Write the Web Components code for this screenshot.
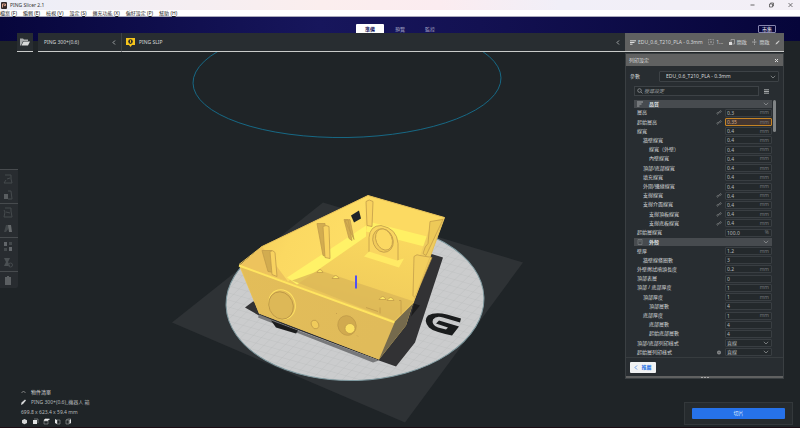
<!DOCTYPE html>
<html lang="zh-Hant">
<head>
<meta charset="utf-8">
<title>PING Slicer 2.1</title>
<style>
html,body{margin:0;height:100%}
body{font:5px/7px "Noto Sans","Noto Sans CJK TC",sans-serif;color:#d6d8da;background:#1f2427;overflow:hidden}
</style>
</head>
<body>
<slicer-app></slicer-app>
<script>
const RESET = `*{box-sizing:border-box}button,input,select{font:inherit;color:inherit;margin:0;padding:0;border:0;background:none;min-width:0;border-radius:0;outline:0}button{cursor:pointer}svg{display:block;flex:none}a{color:inherit;text-decoration:none}`;
function define(name, html, setup) {
  customElements.define(name, class extends HTMLElement {
    connectedCallback() {
      if (this.shadowRoot) return;
      const root = this.attachShadow({mode: 'open'});
      const t = document.createElement('template');
      t.innerHTML = '<style>' + RESET + '</style>' + (typeof html === 'function' ? html(this) : html);
      root.append(t.content.cloneNode(true));
      if (setup) setup(this, root);
    }
  });
}

define('title-bar', `
<style>
:host{display:flex;align-items:center;height:10px;padding:0 7px 0 1px;gap:3px;color:#333;background:linear-gradient(90deg,#eceef8,#fbeeee 40%,#fbecf0 55%,#f1eff8 70%,#f3eff6)}
h1{font:inherit;margin:0;flex:1}
div{display:flex;gap:14px}button{width:5px;height:6px}
</style>
<svg width="6" height="7" viewBox="0 0 6 7"><rect width="6" height="7" rx="1" fill="#33292a"/><path d="M1.5 5.5V2h3v1.6H2.8" stroke="#d9a38c" fill="none"/></svg>
<h1>PING Slicer 2.1</h1>
<div>
<button aria-label="最小化"><svg width="5" height="6" viewBox="0 0 5 6"><path d="M.5 3h4" stroke="#444" stroke-width=".8"/></svg></button>
<button aria-label="還原"><svg width="5" height="6" viewBox="0 0 5 6"><path d="M.5 2h3v3h-3zM1.5 1.8V1h3v3h-.8" stroke="#444" stroke-width=".7" fill="none"/></svg></button>
<button aria-label="關閉"><svg width="5" height="6" viewBox="0 0 5 6"><path d="M.5 1l4 4m0-4l-4 4" stroke="#444" stroke-width=".7"/></svg></button>
</div>`);

define('menu-bar', `
<style>
:host{display:block;background:#fff;color:#222;border-bottom:1px solid #a9a9bb}
nav{display:flex;gap:6px;height:6px;line-height:6px;white-space:nowrap}
u{text-decoration-thickness:1px}
</style>
<nav>${[['檔案','F'],['編輯','E'],['檢視','V'],['設定','S'],['擴充功能','X'],['偏好設定','P'],['幫助','H']].map(([t,k]) => `<a href="#">${t} (<u>${k}</u>)</a>`).join('')}</nav>`);

define('stage-header', `
<style>
:host{display:grid;grid-template-columns:1fr auto 1fr;align-items:center;height:24px;padding:0 24px;background:linear-gradient(90deg,#07063c,#17165c 40%,#131152 60%,#06053a)}
nav{grid-column:2;display:flex;gap:2px}
button{width:28px;height:10px;line-height:10px;color:#a3a3c4;border-radius:1px}
button.on{background:#fff;color:#17165c;font-weight:700}
a{justify-self:end;width:18px;height:8px;line-height:6px;border:1px solid #8685ad;border-radius:1px;color:#fff;text-align:center}
</style>
<nav><button class="on">準備</button><button>預覽</button><button>監控</button></nav><a href="#">市集</a>`);

const chevronLeft = `<svg width="4" height="5" viewBox="0 0 4 5"><path d="M3 .5l-2 2 2 2" stroke="currentColor" stroke-width=".7" fill="none"/></svg>`;
const chevronDown = `<svg width="6" height="4" viewBox="0 0 6 4"><path d="M.8 .8L3 3 5.2.8" stroke="#999c9e" stroke-width=".7" fill="none"/></svg>`;

define('config-bar', `
<style>
:host{display:flex;gap:5px;height:19px;margin:-8px 16px 0 17px;position:relative}
button{display:flex;align-items:center;background:#282d31;border-bottom:1px solid #c9cbca;text-align:left;white-space:nowrap}
.open{width:16px;justify-content:center}
.bar{flex:1;display:flex;min-width:0}
.printer{width:84px;padding:0 5px 0 6px;justify-content:space-between;border-right:1px solid #3c4145}
.material{flex:1;padding:0 5px 0 4px;gap:4px}.material span{flex:1}
.profile{width:159px;background:#606161;padding:0 4px 0 5px;gap:2px;justify-content:space-between}
.profile span{display:flex;align-items:center;gap:2px}
</style>
<button class="open" aria-label="開啟檔案"><svg width="10" height="8" viewBox="0 0 10 8"><path d="M0 7.5V.5h3l1 1h4V3H3L1 7.5z" fill="#a9acae"/><path d="M3.4 3.5H10L8 7.5H1.5z" fill="#d8dada"/></svg></button>
<div class="bar">
<button class="printer">PING 300+(0.6)${chevronLeft}</button>
<button class="material"><svg width="9" height="9" viewBox="0 0 9 9"><path d="M0 0h9v7H6L4.500 9 3 7H0z" fill="#f6c51c"/><circle cx="4.500" cy="3.600" r="2.300" fill="#2a2c2d"/><path d="M4.500 2.200v2.500" stroke="#f6c51c"/></svg><span>PING SLIP</span>${chevronLeft}</button>
<button class="profile">
<span><svg width="6" height="5" viewBox="0 0 6 5"><path d="M0 .8h6M0 2.500h4.500M0 4.200h2.500" stroke="#ddd"/></svg>EDU_0.6_T210_PLA - 0.3mm</span>
<span><svg width="6" height="6" viewBox="0 0 6 6"><path d="M.5 .5h5v5h-5z" stroke="#aaa" stroke-width=".6" stroke-dasharray="1 .5" fill="none"/><path d="M2 2l2 2m0-2L2 4" stroke="#aaa" stroke-width=".5"/></svg>1...</span>
<span><svg width="6" height="6" viewBox="0 0 6 6"><path d="M2 .5h3.500V5H2z" stroke="#bbb" stroke-width=".6" fill="none"/><path d="M0 3h3v3H0z" fill="#ddd"/></svg>開啟</span>
<span><svg width="5" height="6" viewBox="0 0 5 6"><path d="M2.500 0v6M0 3h5" stroke="#bbb" stroke-width=".7" stroke-dasharray="2 .5"/></svg>開啟</span>
<svg width="5" height="5" viewBox="0 0 5 5"><path d="M.5 4.500l.5-1.500L4 .5l.6.6L2 4z" fill="#ccc"/></svg>
</button></div>`);

define('build-plate', `
<style>:host{display:block;position:absolute;inset:0}svg{width:100%;height:100%}</style>
<svg viewBox="0 0 800 428" preserveAspectRatio="xMidYMid slice" aria-hidden="true">
<defs>
<pattern id="g" width="8.500" height="8.500" patternUnits="userSpaceOnUse" patternTransform="matrix(.93 .3 -.68 .62 4 2)"><path d="M0 0H8.500M0 0V8.500" stroke="#b7b9ba" stroke-width=".7"/></pattern>
<linearGradient id="wall" x2="1" y2=".3"><stop stop-color="#f0c75a"/><stop offset=".5" stop-color="#fbd962"/><stop offset="1" stop-color="#fede66"/></linearGradient>
<linearGradient id="front" x2="1" y2=".5"><stop stop-color="#e3bd59"/><stop offset="1" stop-color="#e0bb5a"/></linearGradient>
<linearGradient id="floor" x1=".8" y1="0" x2=".4" y2="1"><stop stop-color="#fbd95f"/><stop offset=".65" stop-color="#f2ce5c"/><stop offset="1" stop-color="#deb958"/></linearGradient>
</defs>
<ellipse cx="347" cy="81" rx="154" ry="57" fill="none" stroke="#16708e" stroke-width=".9" transform="rotate(-1 347 81)"/>
<path d="M172 323L323 203 523 263 405 423z" fill="#2e3235"/>
<g transform="rotate(-2 355 302)"><ellipse cx="355" cy="302" rx="129" ry="79" fill="#cbcccd"/><ellipse cx="355" cy="302" rx="129" ry="79" fill="url(#g)" stroke="#7f999f"/></g>
<path d="M253 302L245 308 259 316 379 361 396 367 415 343 443 258 430 254 400 300z" fill="#323234"/>
<path d="M414 304l6 2-9 11z" fill="#1c1c1d"/>
<path d="M259 315L298 331 379 361 373 363 258 318z" fill="#77787a"/><path d="M271 321l27 10-2 3-20-6z" fill="#1c1c1d"/>
<path d="M461 319L447 315Q435 312 428 316 423 321 429 328 433 332 452 336L459 327 439 321 436 324 448 328 446 330 438 328Q431 325 433 320 436 316 443 318L460 323z" fill="#1a1c1d"/>
<path d="M239 266L262 247 368 196 444.500 218 413 304 406 326 379 360 259 314z" fill="#edc75c"/>
<path d="M240 266L262 247 368 196 366 229 288 282z" fill="url(#wall)"/>
<path d="M240 266L262 247l26 35z" fill="#edc35d"/>
<path d="M368 196L444.500 218 429 248 364 229z" fill="#fcda62"/>
<path d="M288 282L366 229 429 248 413 304 395 321z" fill="url(#floor)"/>
<path d="M287 278L366 226V237L297 285z" fill="#fff267"/>
<path d="M368 222L431 238 428 248 366 232z" fill="#fff064"/>
<path d="M292 281L320 271 414 302 394 321z" fill="#dcb857" opacity=".8"/>
<path d="M444.500 218L413 304 415 270 432 222z" fill="#efcc5e"/>
<path d="M430 222l13-2-17 36-3-2q2-8 5-10z" fill="#edc958" stroke="#be9848" stroke-width=".7"/>
<path d="M414 257q3-3 6-1l12 2-17 40-2-2z" fill="#f3cf5e" stroke="#bd9849" stroke-width=".7"/>
<path d="M240 266L395 322 379 360 259 314z" fill="url(#front)"/>
<path d="M239 266L395 323" stroke="#ffe560" stroke-width="2"/>
<path d="M239 265L262 247 368 196 444.500 218 413 304" fill="none" stroke="#e4bf59" stroke-width="1"/>
<path d="M395 322L413 304 406 326 379 360z" fill="#756a4d"/>
<g stroke="#c19c4a" stroke-width=".8">
<path d="M262 251l10 0 2 22-6-1zM317 224l8 0 2 33-4-1zM344 220l4 0 4 21-3-2zM345 221l5-1 4 20z" fill="#d2ac50"/>
<path d="M270 252q3-2 5 1l2 24-5-2zM323 227q3-2 6 0l1 32-5-1zM366 202q3-3 7 0l-1 25-5-1z" fill="#f8d25f"/>
<path d="M369 254V238q1-12 12-12 16 3 17 18v19z" fill="#f9d560"/>
<ellipse cx="383" cy="241" rx="10" ry="12" transform="rotate(-22 383 241)" fill="#f1cb5b"/><ellipse cx="384" cy="240" rx="8" ry="11" transform="rotate(-22 384 240)" fill="#fbd862"/>
<path d="M364 257l5-5 28 9 7-2-5 9z" fill="#ffea65" stroke="none"/>
<ellipse cx="282" cy="305" rx="13" ry="15" transform="rotate(-24 282 305)" fill="none" stroke="#fee163" stroke-width="1"/><ellipse cx="281" cy="306" rx="12" ry="14" transform="rotate(-24 281 306)" fill="#ddb857" stroke="#b99446"/>
<ellipse cx="315" cy="325" rx="3.500" ry="4.500" transform="rotate(-25 315 325)" fill="#f0cb5b"/>
<ellipse cx="347" cy="326" rx="9" ry="10" transform="rotate(-24 347 326)" fill="#d1aa4f"/><circle cx="350" cy="329" r="5" fill="#fbe063"/>
<path d="M317 273q3-6 6 0zM332 279q4-6 7 0zM379 300q4-6 7 0zM387 301q4-6 7 0z" fill="#ffe864"/>
<path d="M399 301l2 0V315M366 308l12 4M336 314l1 0M357 336l1 1M380 308v6" fill="none"/>
</g>
<path d="M351 216l8-5 2 8-7 4z" fill="#1e2429"/>
<path d="M355 276h2v13h-2z" fill="#5151f2"/>
</svg>`);

const toolIcons = [
 '<path d="M2 2h6v4l1 4H1l2-3M4 6l3-1" fill="none" stroke="#454a4d"/>',
 '<path d="M5 2h3l1 8H5" fill="none" stroke="#454a4d"/><path d="M1 5h4v5H1z" fill="#595d60"/>',
 '<path d="M2 1h6v3l1 6H1l1-5-1-2M3 5l4 1" fill="none" stroke="#454a4d"/>',
 '<path d="M3 2h3v3L3 9H1z" fill="#414649"/><path d="M5 2h3l1 7H6z" fill="#65696b"/>',
 '<path d="M1 1h3v4H1zM6 6h3v4H6z" fill="#62666a"/><path d="M6 1h3v3H6zM1 7h3v3H1z" fill="#43484b"/>',
 '<path d="M1 1h6L5 5l2 4H1l2-4z" fill="#4b5053"/><circle cx="7.500" cy="8" r="2" fill="none" stroke="#454a4d"/>',
 '<path d="M2 2h2V1h2v1h2v8H2z" fill="#5b5f62"/>'];
const toolNames = ['移動','縮放','旋轉','鏡像','單一模型設定','支撐攔阻器','自訂'];
define('tool-strip', `
<style>:host{display:block;width:18px;background:#282c30;border-radius:0 2px 2px 0}
button{display:flex;align-items:center;justify-content:center;width:100%;height:17px;padding-right:2px}
button:nth-of-type(odd){border-top:1px solid #474b4e}</style>
${toolIcons.map((p,i) => `<button aria-label="${toolNames[i]}"><svg width="10" height="11" viewBox="0 0 10 11">${p}</svg></button>`).join('')}`);

define('object-info', `
<style>:host{display:block;padding-left:21px;color:#b7babc}
button.line,.line{display:flex;align-items:center;gap:5px;height:10px;white-space:nowrap}
.line svg{width:5px}.title{color:#d6d8da}
.views{display:flex;gap:4px;padding:1px 0 2px}.views button{width:7px;height:7px}</style>
<button class="line title"><svg width="5" height="4" viewBox="0 0 5 4"><path d="M.5 3l2-2 2 2" stroke="#aaa" stroke-width=".7" fill="none"/></svg>物件清單</button>
<button class="line"><svg width="5" height="6" viewBox="0 0 5 6"><path d="M0 6l.5-2.500L4 .5l1 1L2 5z" fill="#d5d7d8"/></svg>PING 300+(0.6)_機器人 箱</button>
<div class="line">699.8 x 623.4 x 59.4 mm</div>
<div class="views">${[
 '<path d="M3.500 1L6 2.300v2.600L3.500 6.200 1 4.900V2.300z" fill="#d5d7d8"/>',
 '<path d="M2 1h4v4" fill="none" stroke="#8b8f91" stroke-width=".7"/><path d="M1 2h4v4H1z" fill="#e0e2e3"/>',
 '<path d="M1 3h4v3H1z" fill="none" stroke="#8b8f91" stroke-width=".7"/><path d="M1 2.500L2 1h4.500L5 2.500z" fill="#eee" stroke="#eee" stroke-width=".6"/>',
 '<path d="M3 2h3v4H3z" fill="none" stroke="#8b8f91" stroke-width=".7"/><path d="M1 1l2 1v4L1 5z" fill="#e0e2e3"/>',
 '<path d="M1 2h3v4H1zL3 1h3" fill="none" stroke="#8b8f91" stroke-width=".7"/><path d="M4.500 2L6 1v4L4.500 6z" fill="#e0e2e3"/>'
].map((p,i) => `<button aria-label="${['3D','前','上','左','右'][i]}"><svg width="7" height="7" viewBox="0 0 7 7">${p}</svg></button>`).join('')}</div>`);

const icons = {
 link: '<svg width="6" height="5" viewBox="0 0 6 5"><path d="M2.500 3.500l-1 .7-.8-.8 1.600-1.200M3.500 1.500l1-.9.9.8-1.700 1.400M2 3l2-1.500" stroke="#86898b" stroke-width=".7" fill="none"/></svg>',
 info: '<svg width="6" height="5" viewBox="0 0 6 5"><circle cx="3" cy="2.500" r="2" fill="#8c8f91"/><path d="M3 1.300v2.400M1.800 2.500h2.400" stroke="#555" stroke-width=".5"/></svg>'};
define('setting-row', el => {
  const {label, value, unit = '', indent = 0, icon, kind} = el.dataset;
  const field = kind === 'select'
    ? `<select id="v"><option>${value}</option></select>${chevronDown}`
    : `<input id="v" value="${value}"><span>${unit}</span>`;
  return `<style>
:host{display:flex;align-items:center;min-height:0;line-height:7px}
label{flex:1;padding-left:${3 + indent * 6}px;white-space:nowrap;color:#d2d4d6}
.icon{width:6px;margin-right:3px}
.field{display:flex;align-items:center;width:47px;height:8px;padding:0 2px 0 1px;border:1px solid #393e42;background:#24292c;color:#b6b9bb;border-radius:1px}
.field.warn{border-color:#c68424;background:#443630;color:#d1a989}
input,select{flex:1;width:0;height:6px;line-height:6px}select{appearance:none}
.field span{color:#74787b}
</style><label for="v">${label}</label><div class="icon">${icons[icon] || ''}</div><div class="field ${kind || ''}">${field}</div>`;
});

define('setting-section', el => `
<style>:host{display:flex;align-items:center;background:#474b4f;padding:0 3px;height:8px;align-self:center;line-height:8px;color:#dfe1e2}
h3{flex:1;margin:0;font:inherit;font-weight:700}div{width:12px}</style>
<div>${el.dataset.icon === 'shell' ? '<svg width="6" height="6" viewBox="0 0 6 6"><path d="M1 .5h4v5H1zM2 2h2" fill="none" stroke="#85898b" stroke-width=".6"/></svg>' : '<svg width="6" height="6" viewBox="0 0 6 6"><path d="M0 1h6M0 3h4.500M0 5h2.500" stroke="#a3a6a8"/></svg>'}</div>
<h3><slot></slot></h3>${chevronDown}`);

const mm = (label, value, indent = 0, icon = '', kind = '', unit = 'mm') => `<setting-row data-label="${label}" data-value="${value}" data-indent="${indent}" data-icon="${icon}" data-kind="${kind}" data-unit="${unit}"></setting-row>`;
const n = (label, value, indent) => mm(label, value, indent, '', '', '');
define('settings-panel', `
<style>
:host{display:flex;flex-direction:column;width:159px;background:#282d31;border:1px solid #3a3f42;min-height:0}
header{display:flex;align-items:center;justify-content:space-between;height:12px;padding:0 4px 0 3px;background:#606161;color:#dcdcdc;flex:none}
h2{font:inherit;margin:0}header button{width:5px;height:5px}
.profile{display:flex;align-items:center;gap:19px;height:11px;margin:5px 4px 0 4px}
.select{flex:1;display:flex;align-items:center;height:11px;padding:0 2px 0 6px;border:1px solid #3d4246;background:#24292c;border-radius:1px}
select{flex:1;appearance:none;height:9px}
.search{display:flex;gap:5px;align-items:center;height:10px;margin:4px 8px 0 8px}
.box{display:flex;align-items:center;gap:1px;width:125px;height:10px;border:1px solid #3d4246;padding:0 2px;background:#24292c}
.box input{flex:1;font-style:italic}.box input::placeholder{color:#95999b;opacity:1}
.scroll{flex:1;display:flex;min-height:0;margin-top:3px;padding:0 7px 0 8px;justify-content:space-between;border-bottom:1px solid #373c3f}
.list{width:138px;display:grid;grid-auto-rows:1fr;min-height:0}
.thumb{width:3px;height:32px;margin-top:1px;background:#808486;border-radius:2px}
footer{flex:none;display:flex;padding:4px 4px 3px}
.basic{display:flex;align-items:center;justify-content:center;gap:3px;width:26px;height:11px;background:#f1f2f3;color:#2a72e4;font-weight:700;border-radius:1px}
.grip{height:2px;background:#606161;display:flex;align-items:center;justify-content:center;gap:1px;flex:none}.grip i{width:2px;height:1px;background:#aaa}
</style>
<header><h2>列印設定</h2><button aria-label="關閉"><svg width="5" height="5" viewBox="0 0 5 5"><path d="M1 1l3 3m0-3L1 4" stroke="#ddd"/></svg></button></header>
<div class="profile"><label for="p">參數</label><div class="select"><select id="p"><option>EDU_0.6_T210_PLA - 0.3mm</option></select>${chevronDown}</div></div>
<div class="search"><div class="box"><svg width="6" height="6" viewBox="0 0 6 6"><circle cx="2.500" cy="2.500" r="1.800" fill="none" stroke="#a2a5a7" stroke-width=".7"/><path d="M4 4l1.500 1.500" stroke="#a2a5a7" stroke-width=".7"/></svg><input aria-label="搜尋設定" placeholder="搜尋設定"></div>
<button aria-label="設定選單"><svg width="5" height="5" viewBox="0 0 5 5"><path d="M0 .8h5M0 2.500h5M0 4.200h5" stroke="#b5b8b9" stroke-width=".9"/></svg></button></div>
<div class="scroll"><div class="list">
<setting-section>品質</setting-section>
${mm('層高','0.3',0,'link')}${mm('起始層高','0.35',0,'link','warn')}${mm('線寬','0.4')}${mm('牆壁線寬','0.4',1)}${mm('線寬（外壁）','0.4',2)}${mm('內壁線寬','0.4',2)}${mm('頂部/底部線寬','0.4',1)}${mm('填充線寬','0.4',1)}${mm('外圍/邊緣線寬','0.4',1)}${mm('支撐線寬','0.4',1,'link')}${mm('支撐介面線寬','0.4',1,'link')}${mm('支撐頂板線寬','0.4',2,'link')}${mm('支撐底板線寬','0.4',2,'link')}${mm('起始層線寬','100.0',0,'','','%')}
<setting-section data-icon="shell">外殼</setting-section>
${mm('壁厚','1.2')}${n('牆壁線條圈數','3',1)}${mm('外壁擦拭噴頭長度','0.2')}${n('頂部表層','0')}${mm('頂部 / 底部厚度','1')}${mm('頂部厚度','1',1)}${n('頂部層數','4',2)}${mm('底部厚度','1',1)}${n('底部層數','4',2)}${n('起始底部層數','4',2)}${mm('頂部/底部列印樣式','直線',0,'','select')}${mm('起始層列印樣式','直線',0,'info','select')}
</div><div class="thumb"></div></div>
<footer><button class="basic">${chevronLeft}推薦</button></footer>
<div class="grip"><i></i><i></i><i></i></div>`);

define('slice-card', `
<style>:host{display:block;width:109px;padding:5px 7px;background:#262b2e;border:1px solid #33383b}
button{display:block;width:100%;height:11px;background:#2672ea;color:#dceaff;border-radius:1px}</style>
<button>切片</button>`);

define('slicer-app', `
<style>
:host{display:flex;flex-direction:column;height:100vh;position:relative;border-bottom:1px solid #1b0d14;box-sizing:border-box}
title-bar,menu-bar,stage-header{position:relative;flex:none}config-bar{flex:none}
main{flex:1;display:flex;justify-content:space-between;position:relative;min-height:0}
.left,.right{display:flex;flex-direction:column;min-height:0}
.left{justify-content:space-between;padding-top:117px}
.right{align-items:flex-end;padding:1px 7px 2px 0}
settings-panel{flex:1;margin:0 9px 23px 0}
</style>
<build-plate></build-plate>
<title-bar></title-bar><menu-bar></menu-bar><stage-header></stage-header><config-bar></config-bar>
<main><div class="left"><tool-strip></tool-strip><object-info></object-info></div>
<div class="right"><settings-panel></settings-panel><slice-card></slice-card></div></main>`);
</script>
</body>
</html>
